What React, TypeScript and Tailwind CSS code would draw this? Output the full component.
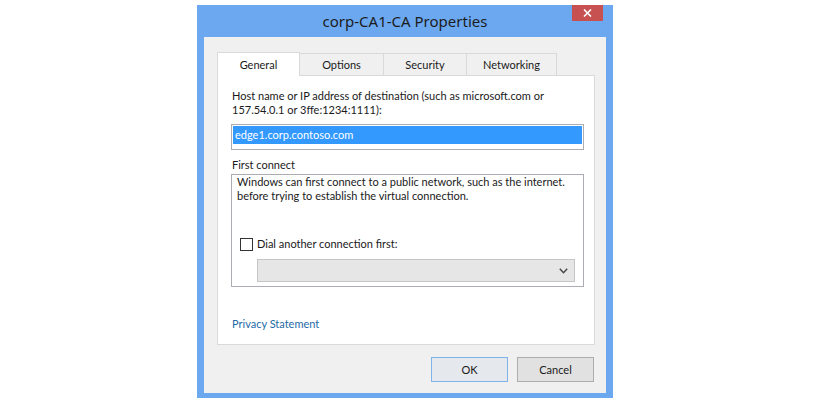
import React from "react";

function Tab({ label, selected, width }: { label: string; selected?: boolean; width: string }) {
  if (selected) {
    return (
      <div
        className={`relative z-10 -mb-px flex h-[24px] items-center justify-center border border-b-0 border-[#d9d9d9] bg-white ${width}`}
      >
        {label}
      </div>
    );
  }
  return (
    <div
      className={`-ml-px flex h-[22px] items-center justify-center border border-b-0 border-[#d9d9d9] bg-[#f0f0f0] ${width}`}
    >
      {label}
    </div>
  );
}

export default function App() {
  return (
    <div
      className="min-h-[407px] w-[834px] bg-white pl-[197px] pt-[5px] text-[11px] leading-[14px] text-[#1a1a1a]"
      style={{ fontFamily: 'Lato, "Noto Sans", sans-serif' }}
    >
      <div className="flex h-[393px] w-[416px] flex-col bg-[#6ba8f0]">
        {/* title bar */}
        <div className="relative flex h-[32px] items-center justify-center">
          <span
            className="text-[15px] leading-[20px] text-[#1c1c1c]"
            style={{ fontFamily: '"Noto Sans", sans-serif' }}
          >
            corp-CA1-CA Properties
          </span>
          <div className="absolute right-[10px] top-0 flex h-[16px] w-[31px] items-center justify-center bg-[#c75050]">
            <svg width="9" height="8" viewBox="0 0 9 8">
              <path d="M1 0.5 L8 7.5 M8 0.5 L1 7.5" stroke="white" strokeWidth="1.6" />
            </svg>
          </div>
        </div>
        {/* client area */}
        <div className="mx-[7px] mb-[5px] flex flex-1 flex-col bg-[#f0f0f0] pl-[13px] pr-[11px] pt-[15px]">
          <div className="flex items-end">
            <Tab label="General" selected width="w-[83px]" />
            <Tab label="Options" width="w-[85px]" />
            <Tab label="Security" width="w-[84px]" />
            <Tab label="Networking" width="w-[91px]" />
          </div>
          <div className="flex h-[270px] flex-col border border-[#d9d9d9] bg-white pl-[14px] pt-[13px]">
            <div className="whitespace-nowrap">Host name or IP address of destination (such as microsoft.com or</div>
            <div className="whitespace-nowrap">157.54.0.1 or 3ffe:1234:1111):</div>
            <div className="-ml-px mt-[7px] h-[26px] w-[353px] border border-[#abadb3] bg-white p-px">
              <div className="h-[18px] bg-[#3399ff] pl-[2px] leading-[18px] text-white">edge1.corp.contoso.com</div>
            </div>
            <div className="mt-[7px] leading-[16px]">First connect</div>
            <div className="-ml-px mt-[1px] flex h-[113px] w-[353px] flex-col border border-[#abadb3] bg-white pl-[5px]">
              <div className="whitespace-nowrap leading-[14px]">
                Windows can first connect to a public network, such as the internet.
              </div>
              <div className="whitespace-nowrap leading-[14px]">before trying to establish the virtual connection.</div>
              <div className="mt-[34px] flex items-center pl-[3px]">
                <div className="h-[13px] w-[13px] border border-[#333333] bg-white" />
                <span className="ml-[4px]">Dial another connection first:</span>
              </div>
              <div className="ml-[20px] mt-[8px] flex h-[23px] w-[318px] items-center justify-end border border-[#c5c5c5] bg-[#e6e6e6] pr-[6px]">
                <svg width="9" height="6" viewBox="0 0 9 6">
                  <path d="M0.8 0.8 L4.5 4.7 L8.2 0.8" stroke="#444" strokeWidth="1.4" fill="none" />
                </svg>
              </div>
            </div>
            <div className="mt-[30px] text-[#1e6aa6]">Privacy Statement</div>
          </div>
          <div className="mt-[12px] flex justify-end gap-[9px] pr-[1px]">
            <div className="flex h-[25px] w-[77px] items-center justify-center border border-[#7eb4ea] bg-[#e5e8ec]">
              OK
            </div>
            <div className="flex h-[25px] w-[77px] items-center justify-center border border-[#adadad] bg-[#e1e1e1]">
              Cancel
            </div>
          </div>
        </div>
      </div>
    </div>
  );
}
